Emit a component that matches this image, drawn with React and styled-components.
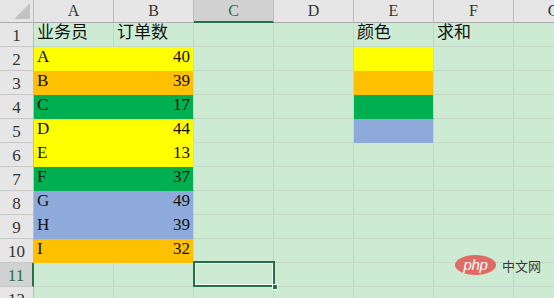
import React from 'react';
import styled, { createGlobalStyle } from 'styled-components';

const GlobalStyle = createGlobalStyle`
  * {
    box-sizing: border-box;
    margin: 0;
    padding: 0;
  }
  body {
    background: #cdebd3;
    overflow: hidden;
  }
`

const green = '#217346'

const fills = {
  yellow: '#ffff00',
  orange: '#ffc000',
  green: '#00b050',
  blue: '#8eaadb',
}

const Sheet = styled.div`
  position: relative;
  width: 554px;
  height: 298px;
  overflow: hidden;
  display: grid;
  grid-template-columns: 34px repeat(7, 80px);
  grid-template-rows: 23px repeat(12, 24px);
  background: #cdebd3;
  font-family: "Liberation Serif", "Noto Sans CJK SC", serif;
`

const Corner = styled.div`
  position: relative;
  background: #e6e6e6;
  border-right: 1px solid #bcbcbc;
  border-bottom: 1px solid #ababab;
`

const Triangle = styled.div`
  position: absolute;
  right: 3px;
  bottom: 3px;
  width: 0;
  height: 0;
  border-left: 16px solid transparent;
  border-bottom: 16px solid #c3c3c3;
`

const ColHead = styled.div`
  display: flex;
  align-items: center;
  justify-content: center;
  font-size: 16px;
  color: ${p => (p.$active ? green : '#333')};
  background: ${p => (p.$active ? '#d2d2d2' : '#e6e6e6')};
  border-right: 1px solid #bcbcbc;
  border-bottom: ${p => (p.$active ? `2px solid ${green}` : '1px solid #ababab')};
  padding-top: ${p => (p.$active ? '1px' : '0')};
  white-space: nowrap;
  overflow: hidden;
`

const RowHead = styled.div`
  display: flex;
  align-items: center;
  justify-content: center;
  font-size: 17px;
  color: ${p => (p.$active ? green : '#333')};
  background: ${p => (p.$active ? '#d2d2d2' : '#e6e6e6')};
  border-right: ${p => (p.$active ? `2px solid ${green}` : '1px solid #bcbcbc')};
  border-bottom: 1px solid #c8c8c8;
  padding-top: 2px;
`

const Cell = styled.div`
  display: flex;
  align-items: flex-end;
  justify-content: ${p => (p.$num ? 'flex-end' : 'flex-start')};
  padding: 0 3px 3px 3px;
  font-size: 17px;
  line-height: 20px;
  color: #111;
  background: ${p => (p.$fill ? fills[p.$fill] : 'transparent')};
  border-right: 1px solid ${p => (p.$fill && p.$joinRight ? fills[p.$fill] : '#c3d8c6')};
  border-bottom: 1px solid ${p => (p.$fill ? fills[p.$fill] : '#c3d8c6')};
  white-space: nowrap;
  overflow: hidden;
`

const Selected = styled.div`
  position: absolute;
  left: 193px;
  top: 261px;
  width: 82px;
  height: 26px;
  border: 2px solid ${green};
  box-shadow: inset 0 0 0 1px #ffffff;
  pointer-events: none;
`

const Handle = styled.div`
  position: absolute;
  right: -5px;
  bottom: -5px;
  width: 6px;
  height: 6px;
  background: ${green};
  border: 1px solid #ffffff;
`

const Watermark = styled.div`
  position: absolute;
  left: 455px;
  top: 255px;
  display: flex;
  align-items: center;
  gap: 6px;
`

const PhpBadge = styled.div`
  width: 41px;
  height: 20px;
  border-radius: 50%;
  background: #df6b64;
  color: #ffffff;
  display: flex;
  align-items: center;
  justify-content: center;
  font-family: "Liberation Sans", sans-serif;
  font-style: italic;
  font-size: 15px;
  padding-bottom: 2px;
  letter-spacing: -0.3px;
`

const WmText = styled.span`
  font-family: "Noto Sans CJK SC", sans-serif;
  font-size: 13px;
  color: #3a3a3a;
`

const cols = ['A', 'B', 'C', 'D', 'E', 'F', 'G']

const rows = [
  { a: '业务员', b: '订单数', e: '颜色', f: '求和' },
  { a: 'A', b: 40, fill: 'yellow', eFill: 'yellow' },
  { a: 'B', b: 39, fill: 'orange', eFill: 'orange' },
  { a: 'C', b: 17, fill: 'green', eFill: 'green' },
  { a: 'D', b: 44, fill: 'yellow', eFill: 'blue' },
  { a: 'E', b: 13, fill: 'yellow' },
  { a: 'F', b: 37, fill: 'green' },
  { a: 'G', b: 49, fill: 'blue' },
  { a: 'H', b: 39, fill: 'blue' },
  { a: 'I', b: 32, fill: 'orange' },
  {},
  {},
]

export default function App() {
  return (
    <Sheet>
      <GlobalStyle />
      <Corner><Triangle /></Corner>
      {cols.map(c => (
        <ColHead key={c} $active={c === 'C'}>{c}</ColHead>
      ))}
      {rows.map((r, i) => (
        <React.Fragment key={i}>
          <RowHead $active={i === 10}>{i + 1}</RowHead>
          <Cell $fill={r.fill} $joinRight>{r.a}</Cell>
          <Cell $fill={r.fill} $num={typeof r.b === 'number'}>{r.b}</Cell>
          <Cell />
          <Cell />
          <Cell $fill={r.eFill}>{r.e}</Cell>
          <Cell>{r.f}</Cell>
          <Cell />
        </React.Fragment>
      ))}
      <Selected><Handle /></Selected>
      <Watermark>
        <PhpBadge>php</PhpBadge>
        <WmText>中文网</WmText>
      </Watermark>
    </Sheet>
  );
}
